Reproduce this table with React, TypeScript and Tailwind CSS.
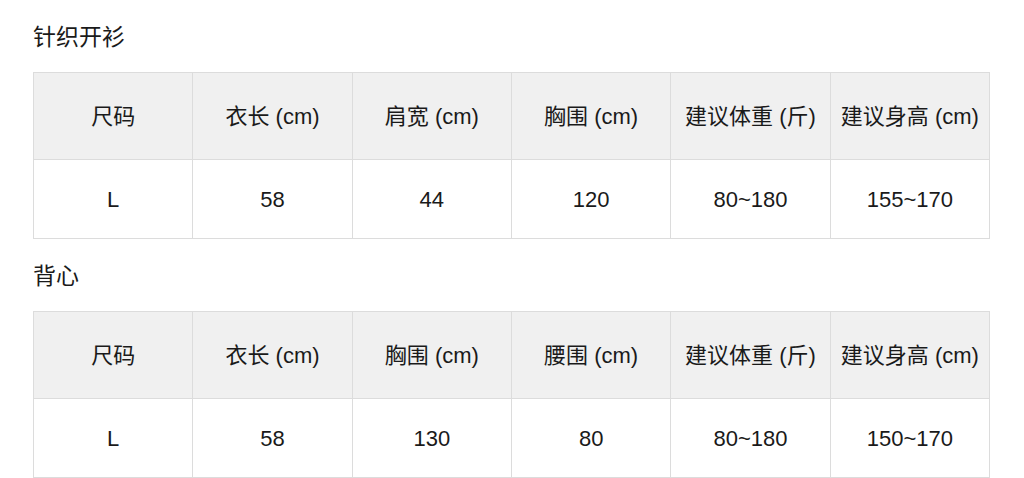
import React from 'react'

const FONT = '"Liberation Sans", "Noto Sans CJK SC", sans-serif'

type Table = { title: string; head: string[]; row: string[] }

const TABLES: Table[] = [
  {
    title: '针织开衫',
    head: ['尺码', '衣长 (cm)', '肩宽 (cm)', '胸围 (cm)', '建议体重 (斤)', '建议身高 (cm)'],
    row: ['L', '58', '44', '120', '80~180', '155~170'],
  },
  {
    title: '背心',
    head: ['尺码', '衣长 (cm)', '胸围 (cm)', '腰围 (cm)', '建议体重 (斤)', '建议身高 (cm)'],
    row: ['L', '58', '130', '80', '80~180', '150~170'],
  },
]

function SizeTable({ t, first }: { t: Table; first: boolean }) {
  return (
    <div className={first ? '' : 'mt-[23px]'}>
      <h2 className="h-[28px] text-[23px] leading-[28px] font-normal text-[#1a1a1a]">{t.title}</h2>
      <div className="mt-[21px] grid w-[957px] grid-cols-6 border-l border-t border-[#dcdcdc]">
        {t.head.map((h, i) => (
          <div
            key={'h' + i}
            className="flex h-[87px] items-center justify-center border-b border-r border-[#dcdcdc] bg-[#f0f0f0] text-[22px] text-[#1a1a1a]"
          >
            {h}
          </div>
        ))}
        {t.row.map((c, i) => (
          <div
            key={'r' + i}
            className="flex h-[79px] items-center justify-center border-b border-r border-[#dcdcdc] bg-white text-[22px] text-[#1a1a1a]"
          >
            {c}
          </div>
        ))}
      </div>
    </div>
  )
}

export default function App() {
  return (
    <div className="h-[478px] w-[1024px] overflow-hidden bg-white pl-[33px] pt-[23px]" style={{ fontFamily: FONT }}>
      {TABLES.map((t, i) => (
        <SizeTable key={t.title} t={t} first={i === 0} />
      ))}
    </div>
  )
}
